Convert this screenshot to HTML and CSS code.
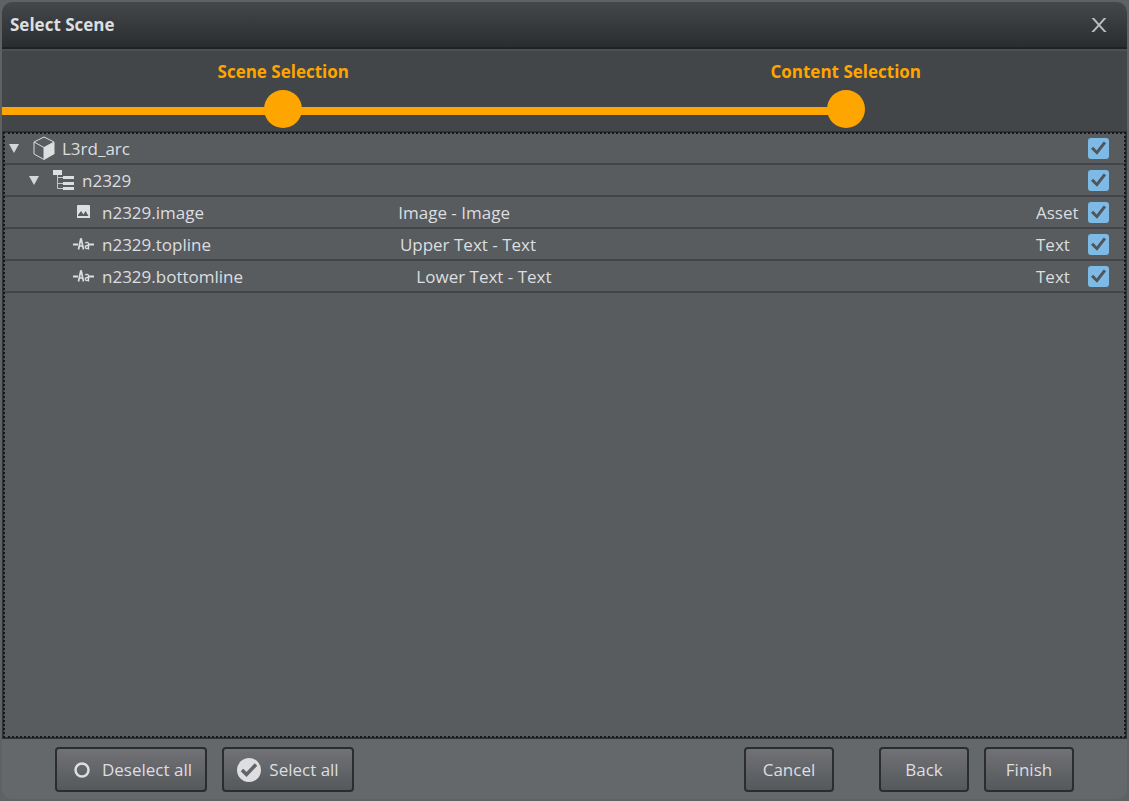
FILE: index.html
```html
<!DOCTYPE html>
<html lang="en">
<head>
<meta charset="utf-8">
<title>Select Scene</title>
<link rel="stylesheet" href="styles.css">
</head>
<body>
<main class="dialog">
  <header class="titlebar">
    <h1 class="title">Select Scene</h1>
    <button class="close" type="button" aria-label="Close"><svg width="16" height="16" viewBox="0 0 16 16"><path d="M.5 1h2.700l4.800 5.400L12.800 1h2.700L9.300 7.900 15.700 15h-2.700L8 9.400 3 15H.3l6.400-7.100z" fill="#b9babb"/></svg></button>
  </header>

  <ol class="steps">
    <li class="step"><span class="step-label">Scene Selection</span><span class="track"><span class="dot"></span></span></li>
    <li class="step"><span class="step-label">Content Selection</span><span class="track track-last"><span class="dot"></span></span></li>
  </ol>

  <section class="list">
    <ul class="tree">
      <li class="row">
        <button class="arrow" type="button" aria-label="Collapse L3rd_arc"><svg width="12" height="12" viewBox="0 0 12 12"><path d="M1 2h10L6 11z" fill="#d5d6d8"/></svg></button>
        <svg class="icon" width="24" height="24" viewBox="0 0 24 24"><path d="M12 1 22 6 12 11.500 2 6zM2 6v12l10 5.500V11.500" fill="none" stroke="#d9dadc" stroke-width="1"/><path d="M12 11.500 22.500 6v12L12 24z" fill="#dddee0"/></svg>
        <label class="name" for="c1">L3rd_arc</label>
        <input class="check" type="checkbox" id="c1" checked>
      </li>
      <li class="row level-2">
        <button class="arrow" type="button" aria-label="Collapse n2329"><svg width="12" height="12" viewBox="0 0 12 12"><path d="M1 2h10L6 11z" fill="#d5d6d8"/></svg></button>
        <svg class="icon" width="24" height="24" viewBox="0 0 24 24"><path d="M1 2h9v5H1zM11 8h11v3H11zM11 14h11v3H11zM11 19h11v3H11z" fill="#dddee0"/><path d="M5.500 7v13.500H11M5.500 9.500H11M5.500 15.500H11" fill="none" stroke="#c3c5c6" stroke-width="1"/></svg>
        <label class="name" for="c2">n2329</label>
        <input class="check" type="checkbox" id="c2" checked>
      </li>
      <li class="row level-3">
        <svg class="icon" width="24" height="24" viewBox="0 0 24 24"><path d="M6 5h11a1 1 0 0 1 1 1v12H5V6a1 1 0 0 1 1-1z" fill="#dddee0"/><path d="M6 16v-1l3-4 2.500 3.500L13.500 11l3 5z" fill="#585c5f"/></svg>
        <label class="name" for="c3">n2329.image</label>
        <span class="desc desc-asset">Image - Image</span>
        <span class="type">Asset</span>
        <input class="check" type="checkbox" id="c3" checked>
      </li>
      <li class="row level-3">
        <svg class="icon" width="24" height="24" viewBox="0 0 24 24"><use href="#text-icon"/></svg>
        <label class="name" for="c4">n2329.topline</label>
        <span class="desc">Upper Text - Text</span>
        <span class="type">Text</span>
        <input class="check" type="checkbox" id="c4" checked>
      </li>
      <li class="row level-3">
        <svg class="icon" width="24" height="24" viewBox="0 0 24 24"><g id="text-icon" fill="none" stroke="#dddee0"><path d="M1 12.500h5M17 12.500h5" stroke-width="2"/><path d="M6.500 17.500 8.700 7h.600l2.200 10.500M7.500 14h3" stroke-width="1.700"/><path d="M13.300 11.200c.8-1.200 3.200-1.200 3.200.6v5.700M16.500 13.200c-2 0-3.200.5-3.200 1.900 0 2 2.500 1.900 3.200.2" stroke-width="1.400"/></g></svg>
        <label class="name" for="c5">n2329.bottomline</label>
        <span class="desc">Lower Text - Text</span>
        <span class="type">Text</span>
        <input class="check" type="checkbox" id="c5" checked>
      </li>
    </ul>
  </section>

  <footer class="footer">
    <button class="btn btn-deselect" type="button"><svg width="24" height="24" viewBox="0 0 24 24"><circle cx="12" cy="12" r="6.500" fill="none" stroke="#dddee0" stroke-width="2.500"/></svg>Deselect all</button>
    <button class="btn btn-select" type="button"><svg width="24" height="24" viewBox="0 0 24 24"><circle cx="12" cy="12" r="12" fill="#dddee0"/><path d="m5 12 4.500 4.500L19 6.500" fill="none" stroke="#626467" stroke-width="3.500"/></svg>Select all</button>
    <button class="btn btn-cancel" type="button">Cancel</button>
    <button class="btn btn-back" type="button">Back</button>
    <button class="btn" type="button">Finish</button>
  </footer>
</main>
</body>
</html>
```

FILE: styles.css
```css
* {
  box-sizing: border-box;
}

body {
  margin: 0;
  padding: 2px;
  height: 100vh;
  background: #606163;
  color: #dddee0;
  font: 17px/24px "Open Sans", "Noto Sans", sans-serif;
}

button {
  font: inherit;
  color: inherit;
}

svg {
  display: block;
  flex: none;
}

.dialog {
  height: 100%;
  display: flex;
  flex-direction: column;
  border-radius: 10px;
  overflow: hidden;
  background: #64686b;
}

.titlebar {
  height: 47px;
  flex: none;
  display: flex;
  align-items: center;
  justify-content: space-between;
  padding: 0 20px 0 8px;
  background: linear-gradient(#44484a, #292d2f);
  border-bottom: 2px solid #1e2224;
}

.title {
  margin: 0;
  font-size: 17px;
  font-weight: 700;
}

.close {
  padding: 0;
  border: 0;
  background: none;
}

.steps {
  margin: 0;
  padding: 9px 0 3px;
  flex: none;
  display: grid;
  grid-template-columns: 1fr 1fr;
  list-style: none;
  color: #ffa500;
  font-weight: 700;
  text-align: center;
  background: #424648;
  border-top: 2px solid #4c5052;
}

.step-label {
  display: block;
  height: 30px;
}

.track {
  display: flex;
  justify-content: center;
  background: linear-gradient(#ffa500, #ffa500) 0 17px / 100% 8px no-repeat;
}

.track-last {
  background-size: 50% 8px;
}

.dot {
  width: 38px;
  height: 38px;
  border-radius: 50%;
  background: #ffa500;
}

.list {
  flex: 1;
  border: 2px solid #303436;
  background: #585c5f;
  outline: 2px dotted #15181a;
  outline-offset: -3px;
}

.tree {
  margin: 0;
  padding: 0;
  list-style: none;
}

.row {
  height: 32px;
  display: flex;
  align-items: center;
  padding-right: 16px;
  border-bottom: 2px solid #424648;
}

.level-2 {
  padding-left: 20px;
}

.level-3 {
  padding-left: 68px;
}

.arrow {
  width: 28px;
  padding: 0 0 0 4px;
  border: 0;
  background: none;
}

.name,
.desc,
.type {
  padding-top: 2px;
}

.name {
  margin-left: 6px;
}

.desc {
  flex: 1;
  margin-right: 30%;
  text-align: center;
}

.desc-asset {
  margin-right: 32%;
}

.type {
  width: 52px;
}

.check {
  appearance: none;
  width: 21px;
  height: 21px;
  margin: 0 0 0 auto;
  border-radius: 3px;
  background: #7dbbe6;
}

.type + .check {
  margin-left: 0;
}

.check:checked::before {
  content: "";
  display: block;
  height: 100%;
  background: #505558;
  clip-path: polygon(14% 53%, 25% 44%, 41% 62%, 75% 19%, 86% 27%, 43% 82%);
}

.footer {
  height: 60px;
  flex: none;
  display: flex;
  align-items: flex-start;
  padding: 8px 53px 0;
}

.btn {
  width: 90px;
  height: 45px;
  display: flex;
  align-items: center;
  justify-content: center;
  gap: 8px;
  padding: 0;
  border: 2px solid #292d2f;
  border-radius: 4px;
  background: linear-gradient(#717176, #55595b);
}

.btn-deselect {
  width: 152px;
}

.btn-select {
  width: 132px;
  margin-left: 15px;
}

.btn-cancel {
  margin-left: auto;
}

.btn-back {
  margin: 0 15px 0 45px;
}
```
